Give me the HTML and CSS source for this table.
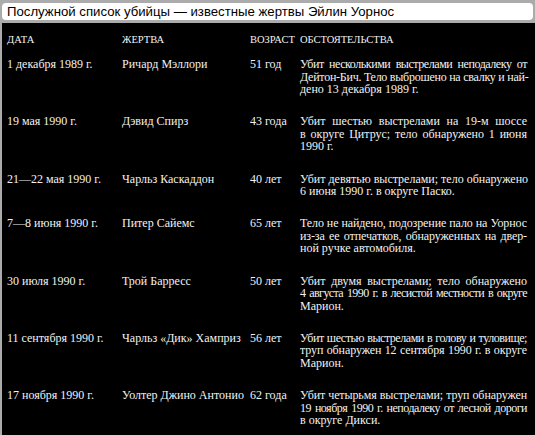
FILE: index.html
```html
<!DOCTYPE html>
<html lang="ru">
<head>
<meta charset="utf-8">
<title>Послужной список убийцы</title>
<link rel="stylesheet" href="styles.css">
</head>
<body>
<div class="frame">
  <div class="title">Послужной список убийцы — известные жертвы Эйлин Уорнос</div>
  <div class="panel">
    <div class="row head">
      <div>ДАТА</div><div>ЖЕРТВА</div><div>ВОЗРАСТ</div><div>ОБСТОЯТЕЛЬСТВА</div>
    </div>
    <div class="row">
      <div>1 декабря 1989 г.</div><div>Ричард Мэллори</div><div>51 год</div>
      <div class="desc"><span class="t4">Убит несколькими выстрелами неподалеку от</span><span class="t2">Дейтон-Бич. Тело выброшено на свалку и най-</span><span class="last">дено 13 декабря 1989 г.</span></div>
    </div>
    <div class="row">
      <div>19 мая 1990 г.</div><div>Дэвид Спирз</div><div>43 года</div>
      <div class="desc"><span>Убит шестью выстрелами на 19-м шоссе</span><span>в округе Цитрус; тело обнаружено 1 июня</span><span class="last">1990 г.</span></div>
    </div>
    <div class="row">
      <div>21—22 мая 1990 г.</div><div>Чарльз Каскаддон</div><div>40 лет</div>
      <div class="desc"><span>Убит девятью выстрелами; тело обнаружено</span><span class="last">6 июня 1990 г. в округе Паско.</span></div>
    </div>
    <div class="row">
      <div>7—8 июня 1990 г.</div><div>Питер Сайемс</div><div>65 лет</div>
      <div class="desc"><span class="t1">Тело не найдено, подозрение пало на Уорнос</span><span class="t1">из-за ее отпечатков, обнаруженных на двер-</span><span class="last">ной ручке автомобиля.</span></div>
    </div>
    <div class="row">
      <div>30 июля 1990 г.</div><div>Трой Барресс</div><div>50 лет</div>
      <div class="desc"><span>Убит двумя выстрелами; тело обнаружено</span><span class="t6">4 августа 1990 г. в лесистой местности в округе</span><span class="last">Марион.</span></div>
    </div>
    <div class="row">
      <div>11 сентября 1990 г.</div><div>Чарльз «Дик» Хамприз</div><div>56 лет</div>
      <div class="desc"><span class="t4">Убит шестью выстрелами в голову и туловище;</span><span class="t1">труп обнаружен 12 сентября 1990 г. в округе</span><span class="last">Марион.</span></div>
    </div>
    <div class="row">
      <div>17 ноября 1990 г.</div><div>Уолтер Джино Антонио</div><div>62 года</div>
      <div class="desc"><span class="t1">Убит четырьмя выстрелами; труп обнаружен</span><span class="t5">19 ноября 1990 г. неподалеку от лесной дороги</span><span class="last">в округе Дикси.</span></div>
    </div>
  </div>
</div>
</body>
</html>
```
FILE: styles.css
```css
html, body {
  margin: 0;
  padding: 0;
  background: #ababab;
  height: 100%;
  overflow: hidden;
}
.frame {
  padding-left: 2px;
  padding-top: 3px;
  height: 100%;
  box-sizing: border-box;
  display: flex;
  flex-direction: column;
}
.title {
  background: #ffffff;
  border-radius: 4px;
  height: 17px;
  margin-right: 2px;
  padding-left: 5px;
  font-family: "Liberation Sans", Arial, sans-serif;
  font-size: 13.2px;
  line-height: 17px;
  color: #000;
  white-space: nowrap;
}
.panel {
  margin-top: 3px;
  flex: 1;
  background: #000;
  color: #f2f2f2;
  font-family: "Liberation Serif", "Times New Roman", serif;
  font-size: 12px;
  line-height: 12.6px;
  padding: 11px 8px 0 5px;
}
.row {
  display: grid;
  grid-template-columns: 115px 128px 50px 227px;
  padding-bottom: 19.5px;
}
.row.head {
  font-size: 10.5px;
  line-height: 12px;
  padding-bottom: 12px;
}
.desc span {
  display: block;
  text-align: justify;
  text-align-last: justify;
  white-space: nowrap;
}
.desc span.last {
  text-align-last: left;
}
.desc .t1 { letter-spacing: -0.1px; }
.desc .t2 { letter-spacing: -0.25px; }
.desc .t4 { letter-spacing: -0.45px; }
.desc .t5 { letter-spacing: -0.5px; }
.desc .t6 { letter-spacing: -0.6px; }
```
